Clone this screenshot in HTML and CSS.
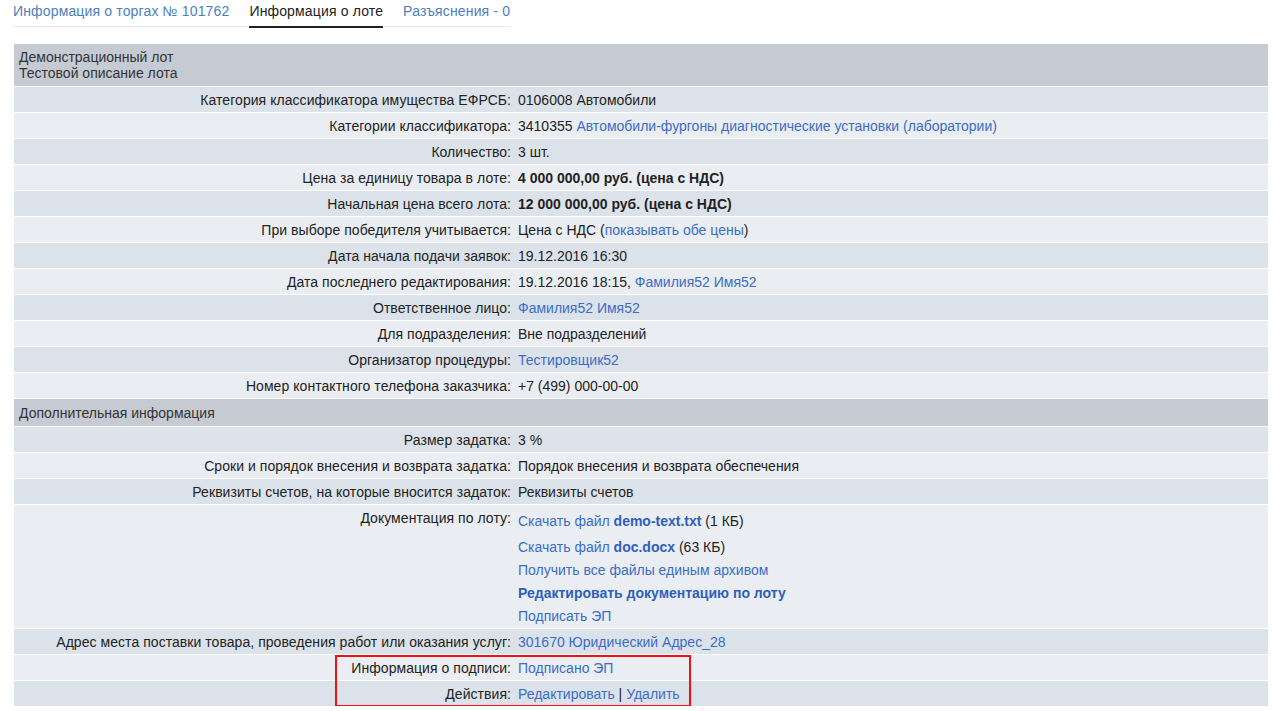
FILE: index.html
```html
<!DOCTYPE html>
<html lang="ru">
<head>
<meta charset="utf-8">
<title>Информация о лоте</title>
<link rel="stylesheet" href="styles.css">
</head>
<body>
<nav class="tabs">
  <a class="tab" href="#">Информация о торгах № 101762</a>
  <a class="tab active" href="#">Информация о лоте</a>
  <a class="tab" href="#">Разъяснения - 0</a>
</nav>
<table class="lot">
  <tr class="head first"><td colspan="2">Демонстрационный лот<br>Тестовой описание лота</td></tr>
  <tr class="dark"><th>Категория классификатора имущества ЕФРСБ:</th><td>0106008 Автомобили</td></tr>
  <tr class="light"><th>Категории классификатора:</th><td>3410355 <a href="#">Автомобили-фургоны диагностические установки (лаборатории)</a></td></tr>
  <tr class="dark"><th>Количество:</th><td>3 шт.</td></tr>
  <tr class="light"><th>Цена за единицу товара в лоте:</th><td><b>4 000 000,00 руб. (цена с НДС)</b></td></tr>
  <tr class="dark"><th>Начальная цена всего лота:</th><td><b>12 000 000,00 руб. (цена с НДС)</b></td></tr>
  <tr class="light"><th>При выборе победителя учитывается:</th><td>Цена с НДС (<a href="#">показывать обе цены</a>)</td></tr>
  <tr class="dark"><th>Дата начала подачи заявок:</th><td>19.12.2016 16:30</td></tr>
  <tr class="light"><th>Дата последнего редактирования:</th><td>19.12.2016 18:15, <a href="#">Фамилия52 Имя52</a></td></tr>
  <tr class="dark"><th>Ответственное лицо:</th><td><a href="#">Фамилия52 Имя52</a></td></tr>
  <tr class="light"><th>Для подразделения:</th><td>Вне подразделений</td></tr>
  <tr class="dark"><th>Организатор процедуры:</th><td><a href="#">Тестировщик52</a></td></tr>
  <tr class="light"><th>Номер контактного телефона заказчика:</th><td>+7 (499) 000-00-00</td></tr>
  <tr class="head"><td colspan="2">Дополнительная информация</td></tr>
  <tr class="dark"><th>Размер задатка:</th><td>3 %</td></tr>
  <tr class="light"><th>Сроки и порядок внесения и возврата задатка:</th><td>Порядок внесения и возврата обеспечения</td></tr>
  <tr class="dark"><th>Реквизиты счетов, на которые вносится задаток:</th><td>Реквизиты счетов</td></tr>
  <tr class="light docs"><th>Документация по лоту:</th><td>
    <div class="file"><a href="#">Скачать файл <b>demo-text.txt</b></a> (1 КБ)</div>
    <div class="file"><a href="#">Скачать файл <b>doc.docx</b></a> (63 КБ)</div>
    <div class="doclink"><a href="#">Получить все файлы единым архивом</a></div>
    <div class="doclink"><a href="#"><b>Редактировать документацию по лоту</b></a></div>
    <div class="doclink"><a href="#">Подписать ЭП</a></div>
  </td></tr>
  <tr class="dark"><th>Адрес места поставки товара, проведения работ или оказания услуг:</th><td><a href="#">301670 Юридический Адрес_28</a></td></tr>
  <tr class="light"><th>Информация о подписи:</th><td><a href="#">Подписано ЭП</a></td></tr>
  <tr class="dark"><th>Действия:</th><td><a href="#">Редактировать</a> | <a href="#">Удалить</a></td></tr>
</table>
<div class="highlight"></div>
</body>
</html>
```

FILE: styles.css
```css
html, body {
  margin: 0;
  padding: 0;
  background: #fff;
}
body {
  font-family: "Liberation Sans", Arial, sans-serif;
  font-size: 14px;
  color: #222;
  padding: 0 5px 0 14px;
  position: relative;
}
a {
  color: #3c6cc8;
  text-decoration: none;
}
.tabs {
  display: flex;
  gap: 20px;
  width: max-content;
  margin-left: -1px;
  border-bottom: 1px solid #eceae4;
  height: 27px;
  box-sizing: border-box;
}
.tab {
  display: block;
  flex-shrink: 0;
  white-space: nowrap;
  padding-top: 3px;
  line-height: 16px;
  height: 26px;
  box-sizing: border-box;
  color: #4a7fc0;
  letter-spacing: 0.15px;
}
.tab.active {
  color: #222;
  border-bottom: 2px solid #222;
  height: 28px;
}
.lot {
  margin-top: 17px;
  width: 1254px;
  border-collapse: collapse;
}
.lot tr {
  border-top: 1px solid #fff;
}
.lot tr:first-child {
  border-top: 0;
}
.lot th, .lot td {
  padding: 0;
  height: 25px;
  line-height: 16px;
  vertical-align: middle;
  font-weight: normal;
}
.lot th {
  width: 497px;
  text-align: right;
  padding-right: 1px;
  color: #222;
  letter-spacing: 0.05px;
}
.lot td {
  padding-left: 6px;
}
.lot tr.head td {
  background: #c6cbd3;
  color: #333;
  height: 26px;
  padding: 1px 5px 0;
  text-align: left;
}
.lot tr.head.first td {
  height: 32px;
  padding: 5px 5px 5px;
}
.lot tr.dark th, .lot tr.dark td {
  background: #dce2e9;
}
.lot tr.light th, .lot tr.light td {
  background: #eaeef2;
}
.lot b {
  font-weight: bold;
}
.lot a b {
  color: #2f5fba;
}
.docs th {
  vertical-align: top;
  padding-top: 5px;
}
.docs td {
  padding-top: 8px;
  padding-bottom: 4px;
  vertical-align: top;
}
.file {
  height: 26px;
  line-height: 16px;
}
.file + .file {
  height: 23px;
}
.doclink {
  height: 23px;
  line-height: 16px;
}
.doclink:last-child {
  height: 16px;
}
.highlight {
  position: absolute;
  left: 335px;
  top: 655px;
  width: 356px;
  height: 52px;
  border: 2px solid #ee1111;
  box-sizing: border-box;
  pointer-events: none;
}
```
